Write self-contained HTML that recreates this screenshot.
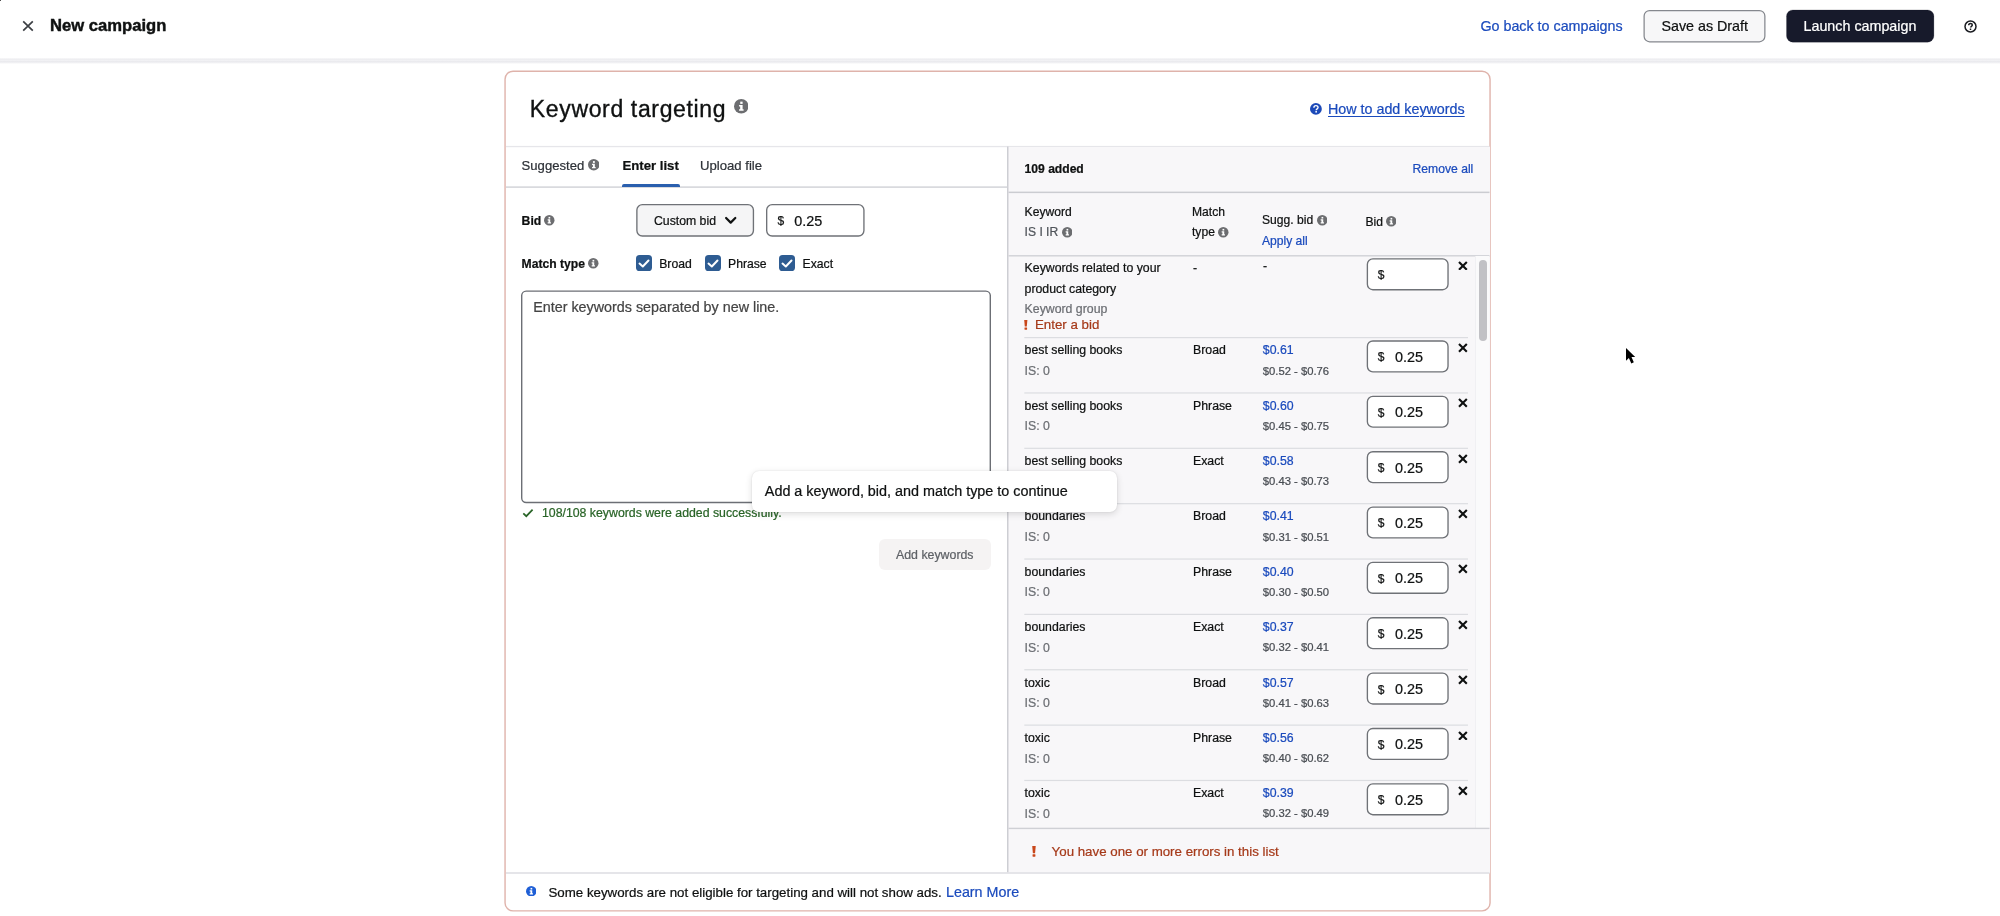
<!DOCTYPE html>
<html><head><meta charset="utf-8"><title>New campaign</title>
<style>
html,body{margin:0;padding:0;background:#fff;}
body{width:2000px;height:916px;position:relative;font-family:"Liberation Sans",sans-serif;}
.t{position:absolute;white-space:nowrap;line-height:1;-webkit-text-stroke:0.22px currentColor;}
.b{position:absolute;box-sizing:border-box;}
</style></head><body><div id="root" style="position:absolute;left:0;top:0;width:2000px;height:916px;overflow:hidden;will-change:transform;">
<svg class="b" style="left:21.6px;top:20.2px" width="12" height="12" viewBox="0 0 12 12"><path d="M1.2 1.4L10.8 10.6M10.8 1.4L1.2 10.6" stroke="#3c3f44" stroke-width="1.7" fill="none"/></svg>
<div class="t" style="top:17.30px;font-size:17.4px;color:#0f1111;left:50.2px;font-weight:bold;transform:scaleX(0.956);transform-origin:0 0;-webkit-text-stroke:0.45px #0f1111;">New campaign</div>
<div class="t" style="top:18.85px;font-size:14.3px;color:#1b4bbd;left:1480.4px;">Go back to campaigns</div>
<svg class="b" style="left:1642px;top:8px" width="125" height="36"><rect x="2.12" y="2.53" width="120.75" height="31.25" rx="5.5" fill="#f7f7f8" stroke="#85888e" stroke-width="1.25"/></svg>
<div class="t" style="top:18.85px;font-size:14.3px;color:#0f1111;left:1661.4px;">Save as Draft</div>
<svg class="b" style="left:1785px;top:8px" width="150" height="36"><rect x="1.50" y="1.90" width="147.40" height="32.30" rx="6.3" fill="#171a2b" stroke="#171a2b" stroke-width="0.2"/></svg>
<div class="t" style="top:18.85px;font-size:14.3px;color:#ffffff;left:1803.5px;">Launch campaign</div>
<svg class="b" style="left:1964.4px;top:19.6px" width="13" height="13" viewBox="0 0 13 13"><circle cx="6.5" cy="6.5" r="5.5" fill="none" stroke="#1b1d22" stroke-width="1.5"/><path d="M4.7 5.2c0-1.1.8-1.8 1.8-1.8s1.8.7 1.8 1.6c0 1.3-1.7 1.3-1.7 2.6" stroke="#1b1d22" stroke-width="1.5" fill="none"/><rect x="5.75" y="8.5" width="1.5" height="1.5" fill="#1b1d22"/></svg>
<div class="b" style="left:0px;top:58px;width:2000px;height:6px;background:linear-gradient(#fbfbfc 0%,#ededf0 18%,#f1f1f4 42%,#e9e9ed 62%,#f3f3f5 82%,#ffffff 100%);"></div>
<div class="b" style="left:0px;top:0px;width:1.3px;height:1.1px;background:#151515;border-radius:0 0 1px 0;"></div>
<svg class="b" style="left:503px;top:69px" width="989" height="844"><rect x="2.05" y="2.20" width="985.00" height="839.70" rx="8" fill="#fff" stroke="#dfb3ab" stroke-width="1.4"/></svg>
<div class="t" style="top:97.50px;font-size:23px;color:#0f1111;left:529.8px;letter-spacing:0.65px;-webkit-text-stroke:0.35px #0f1111;">Keyword targeting</div>
<svg class="b" style="left:733.75px;top:99.35px" width="14.5" height="14.5" viewBox="0 0 16 16"><circle cx="8" cy="8" r="8" fill="#6c6d70"/><rect x="6.9" y="2.9" width="2.6" height="2.5" fill="#fff"/><path d="M5.6 6.6h3.9v4.6h1.1v1.7H5.6v-1.7h1.2V8.3H5.6z" fill="#fff"/></svg>
<svg class="b" style="left:1310.4px;top:102.8px" width="11.8" height="11.8" viewBox="0 0 16 16"><circle cx="8" cy="8" r="8" fill="#1c49b8"/><path d="M5.3 6.3c0-1.7 1.2-2.8 2.8-2.8s2.8 1 2.8 2.5c0 2-2.5 1.9-2.5 3.7" stroke="#fff" stroke-width="1.9" fill="none"/><rect x="7.3" y="10.9" width="2.1" height="2.1" fill="#fff"/></svg>
<div class="t" style="top:101.85px;font-size:14.3px;color:#1b4bbd;left:1328px;text-decoration:underline;text-underline-offset:1.5px;text-decoration-thickness:1px;">How to add keywords</div>
<svg class="b" style="left:506px;top:145px" width="984" height="3"><rect x="0.00" y="0.90" width="983.50" height="1.30" fill="#e6e6ea"/></svg>
<div class="b" style="left:1008px;top:147px;width:481.5px;height:726px;background:#f8f7f9;"></div>
<svg class="b" style="left:1007px;top:146px" width="2" height="727"><rect x="0.00" y="0.50" width="1.50" height="726.50" fill="#cdced3"/></svg>
<div class="t" style="top:158.95px;font-size:13.1px;color:#2e3238;left:521.6px;">Suggested</div>
<svg class="b" style="left:587.65px;top:159.15px" width="11.5" height="11.5" viewBox="0 0 16 16"><circle cx="8" cy="8" r="8" fill="#6c6d70"/><rect x="6.9" y="2.9" width="2.6" height="2.5" fill="#fff"/><path d="M5.6 6.6h3.9v4.6h1.1v1.7H5.6v-1.7h1.2V8.3H5.6z" fill="#fff"/></svg>
<div class="t" style="top:158.90px;font-size:13.2px;color:#0f1111;left:622.4px;font-weight:bold;">Enter list</div>
<div class="t" style="top:158.93px;font-size:13.15px;color:#2e3238;left:700px;">Upload file</div>
<svg class="b" style="left:506px;top:186px" width="502" height="2"><rect x="0.00" y="0.40" width="501.50" height="1.40" fill="#d0d1d6"/></svg>
<div class="b" style="left:622px;top:183.5px;width:57.5px;height:3.6px;background:#2a5fae;border-radius:2px 2px 0 0;"></div>
<div class="t" style="top:214.90px;font-size:12.2px;color:#0f1111;left:521.6px;font-weight:bold;">Bid</div>
<svg class="b" style="left:544.35px;top:215.15px" width="10.5" height="10.5" viewBox="0 0 16 16"><circle cx="8" cy="8" r="8" fill="#6c6d70"/><rect x="6.9" y="2.9" width="2.6" height="2.5" fill="#fff"/><path d="M5.6 6.6h3.9v4.6h1.1v1.7H5.6v-1.7h1.2V8.3H5.6z" fill="#fff"/></svg>
<svg class="b" style="left:635px;top:202px" width="121" height="36"><rect x="1.88" y="2.58" width="116.55" height="31.45" rx="5.5" fill="#f5f5f6" stroke="#6f7277" stroke-width="1.35"/></svg>
<div class="t" style="top:214.88px;font-size:12.25px;color:#0f1111;left:654px;">Custom bid</div>
<svg class="b" style="left:723.5px;top:215.5px" width="14" height="10" viewBox="0 0 14 10"><path d="M2.1 2L6.7 6.6L11.3 2" stroke="#0f1111" stroke-width="2.2" fill="none" stroke-linecap="round" stroke-linejoin="round"/></svg>
<svg class="b" style="left:765px;top:202px" width="101" height="36"><rect x="1.68" y="2.58" width="97.25" height="31.45" rx="5.5" fill="#fff" stroke="#6f7277" stroke-width="1.35"/></svg>
<div class="t" style="top:215.00px;font-size:12px;color:#0f1111;left:777.6px;">$</div>
<div class="t" style="top:213.80px;font-size:14.4px;color:#0f1111;left:794.2px;">0.25</div>
<div class="t" style="top:257.93px;font-size:12.15px;color:#0f1111;left:521.6px;font-weight:bold;">Match type</div>
<svg class="b" style="left:588.45px;top:258.25px" width="10.5" height="10.5" viewBox="0 0 16 16"><circle cx="8" cy="8" r="8" fill="#6c6d70"/><rect x="6.9" y="2.9" width="2.6" height="2.5" fill="#fff"/><path d="M5.6 6.6h3.9v4.6h1.1v1.7H5.6v-1.7h1.2V8.3H5.6z" fill="#fff"/></svg>
<svg class="b" style="left:636.1px;top:254.9px" width="16" height="16" viewBox="0 0 16 16"><rect x="0" y="0" width="16" height="16" rx="3.6" fill="#2e5c92"/><path d="M3.5 8.6L6.8 11.5L12.5 5.5" stroke="#fff" stroke-width="2" fill="none" stroke-linecap="round" stroke-linejoin="round"/></svg>
<div class="t" style="top:257.90px;font-size:12.2px;color:#0f1111;left:659.2px;">Broad</div>
<svg class="b" style="left:704.9px;top:254.9px" width="16" height="16" viewBox="0 0 16 16"><rect x="0" y="0" width="16" height="16" rx="3.6" fill="#2e5c92"/><path d="M3.5 8.6L6.8 11.5L12.5 5.5" stroke="#fff" stroke-width="2" fill="none" stroke-linecap="round" stroke-linejoin="round"/></svg>
<div class="t" style="top:257.90px;font-size:12.2px;color:#0f1111;left:728px;">Phrase</div>
<svg class="b" style="left:779.4px;top:254.9px" width="16" height="16" viewBox="0 0 16 16"><rect x="0" y="0" width="16" height="16" rx="3.6" fill="#2e5c92"/><path d="M3.5 8.6L6.8 11.5L12.5 5.5" stroke="#fff" stroke-width="2" fill="none" stroke-linecap="round" stroke-linejoin="round"/></svg>
<div class="t" style="top:257.90px;font-size:12.2px;color:#0f1111;left:802.6px;">Exact</div>
<svg class="b" style="left:520px;top:289px" width="472" height="216"><rect x="1.70" y="2.10" width="468.60" height="211.40" rx="4.5" fill="#fff" stroke="#6c6f75" stroke-width="1.4"/></svg>
<div class="t" style="top:299.83px;font-size:14.33px;color:#444;left:533.2px;">Enter keywords separated by new line.</div>
<svg class="b" style="left:521.5px;top:507.5px" width="12" height="10" viewBox="0 0 12 10"><path d="M1.3 5.3L4.3 8.2L10.6 1.6" stroke="#296427" stroke-width="1.7" fill="none"/></svg>
<div class="t" style="top:506.85px;font-size:12.3px;color:#296427;left:542px;">108/108 keywords were added successfully.</div>
<div class="b" style="left:878.5px;top:538.8px;width:112px;height:31.7px;border-radius:6px;background:#f5f3f3;"></div>
<div class="t" style="top:548.83px;font-size:12.35px;color:#5e6166;left:896px;">Add keywords</div>
<div class="t" style="top:162.95px;font-size:12.1px;color:#0f1111;left:1024.6px;font-weight:bold;">109 added</div>
<div class="t" style="top:162.93px;font-size:12.15px;color:#1b4bbd;right:526.7px;">Remove all</div>
<svg class="b" style="left:1008px;top:191px" width="482" height="3"><rect x="0.50" y="0.60" width="481.00" height="1.50" fill="#cbccd1"/></svg>
<div class="t" style="top:205.95px;font-size:12.1px;color:#0f1111;left:1024.6px;">Keyword</div>
<div class="t" style="top:225.95px;font-size:12.1px;color:#50555b;left:1024.6px;">IS I IR</div>
<svg class="b" style="left:1061.55px;top:227.05px" width="10.5" height="10.5" viewBox="0 0 16 16"><circle cx="8" cy="8" r="8" fill="#6c6d70"/><rect x="6.9" y="2.9" width="2.6" height="2.5" fill="#fff"/><path d="M5.6 6.6h3.9v4.6h1.1v1.7H5.6v-1.7h1.2V8.3H5.6z" fill="#fff"/></svg>
<div class="t" style="top:205.95px;font-size:12.1px;color:#0f1111;left:1192px;">Match</div>
<div class="t" style="top:225.95px;font-size:12.1px;color:#0f1111;left:1192px;">type</div>
<svg class="b" style="left:1218.15px;top:227.05px" width="10.5" height="10.5" viewBox="0 0 16 16"><circle cx="8" cy="8" r="8" fill="#6c6d70"/><rect x="6.9" y="2.9" width="2.6" height="2.5" fill="#fff"/><path d="M5.6 6.6h3.9v4.6h1.1v1.7H5.6v-1.7h1.2V8.3H5.6z" fill="#fff"/></svg>
<div class="t" style="top:213.95px;font-size:12.1px;color:#0f1111;left:1262px;">Sugg. bid</div>
<svg class="b" style="left:1316.75px;top:215.25px" width="10.5" height="10.5" viewBox="0 0 16 16"><circle cx="8" cy="8" r="8" fill="#6c6d70"/><rect x="6.9" y="2.9" width="2.6" height="2.5" fill="#fff"/><path d="M5.6 6.6h3.9v4.6h1.1v1.7H5.6v-1.7h1.2V8.3H5.6z" fill="#fff"/></svg>
<div class="t" style="top:234.95px;font-size:12.1px;color:#1b4bbd;left:1262px;">Apply all</div>
<div class="t" style="top:215.95px;font-size:12.1px;color:#0f1111;left:1365.4px;">Bid</div>
<svg class="b" style="left:1385.95px;top:216.45px" width="10.5" height="10.5" viewBox="0 0 16 16"><circle cx="8" cy="8" r="8" fill="#6c6d70"/><rect x="6.9" y="2.9" width="2.6" height="2.5" fill="#fff"/><path d="M5.6 6.6h3.9v4.6h1.1v1.7H5.6v-1.7h1.2V8.3H5.6z" fill="#fff"/></svg>
<svg class="b" style="left:1008px;top:255px" width="482" height="2"><rect x="0.50" y="0.10" width="481.00" height="1.40" fill="#d0d1d6"/></svg>
<div class="t" style="top:261.85px;font-size:12.3px;color:#0f1111;left:1024.6px;">Keywords related to your</div>
<div class="t" style="top:282.85px;font-size:12.3px;color:#0f1111;left:1024.6px;">product category</div>
<div class="t" style="top:302.85px;font-size:12.3px;color:#6b6e73;left:1024.6px;">Keyword group</div>
<svg class="b" style="left:1023.7px;top:320px" width="4" height="10" viewBox="0 0 4 10"><path d="M0.2 0H3.4L2.8 6.5H0.8Z" fill="#c9471b"/><rect x="0.5" y="7.4" width="2.6" height="2.3" rx="0.4" fill="#c9471b"/></svg>
<div class="t" style="top:317.85px;font-size:13.3px;color:#a63a1a;left:1035px;">Enter a bid</div>
<div class="t" style="top:261.85px;font-size:12.3px;color:#0f1111;left:1193px;">-</div>
<div class="t" style="top:259.85px;font-size:12.3px;color:#0f1111;left:1263px;">-</div>
<svg class="b" style="left:1365px;top:257px" width="85" height="35"><rect x="2.38" y="1.87" width="80.65" height="30.85" rx="5.5" fill="#fff" stroke="#6f7277" stroke-width="1.35"/></svg>
<div class="t" style="top:269.00px;font-size:12px;color:#0f1111;left:1377.8px;">$</div>
<svg class="b" style="left:1458.1px;top:260.7px" width="9.8" height="9.8" viewBox="0 0 10 10"><path d="M1 1L9 9M9 1L1 9" stroke="#0f1111" stroke-width="2.15" stroke-linecap="butt" fill="none"/></svg>
<svg class="b" style="left:1024px;top:337px" width="444" height="2"><rect x="0.30" y="0.00" width="443.70" height="1.20" fill="#dcdde1"/></svg>
<div class="t" style="top:343.85px;font-size:12.3px;color:#0f1111;left:1024.6px;">best selling books</div>
<div class="t" style="top:364.85px;font-size:12.3px;color:#6b6e73;left:1024.6px;">IS: 0</div>
<div class="t" style="top:343.85px;font-size:12.3px;color:#0f1111;left:1193px;">Broad</div>
<div class="t" style="top:343.85px;font-size:12.3px;color:#1b4bbd;left:1262.8px;">$0.61</div>
<div class="t" style="top:366.38px;font-size:11.25px;color:#484c52;left:1262.8px;">$0.52 - $0.76</div>
<svg class="b" style="left:1365px;top:339px" width="85" height="35"><rect x="2.38" y="1.98" width="80.65" height="30.85" rx="5.5" fill="#fff" stroke="#6f7277" stroke-width="1.35"/></svg>
<div class="t" style="top:351.00px;font-size:12px;color:#0f1111;left:1377.8px;">$</div>
<div class="t" style="top:349.80px;font-size:14.4px;color:#0f1111;left:1395px;">0.25</div>
<svg class="b" style="left:1458.1px;top:343.0px" width="9.8" height="9.8" viewBox="0 0 10 10"><path d="M1 1L9 9M9 1L1 9" stroke="#0f1111" stroke-width="2.15" stroke-linecap="butt" fill="none"/></svg>
<svg class="b" style="left:1024px;top:392px" width="444" height="2"><rect x="0.30" y="0.36" width="443.70" height="1.20" fill="#dcdde1"/></svg>
<div class="t" style="top:399.85px;font-size:12.3px;color:#0f1111;left:1024.6px;">best selling books</div>
<div class="t" style="top:419.85px;font-size:12.3px;color:#6b6e73;left:1024.6px;">IS: 0</div>
<div class="t" style="top:399.85px;font-size:12.3px;color:#0f1111;left:1193px;">Phrase</div>
<div class="t" style="top:399.85px;font-size:12.3px;color:#1b4bbd;left:1262.8px;">$0.60</div>
<div class="t" style="top:421.38px;font-size:11.25px;color:#484c52;left:1262.8px;">$0.45 - $0.75</div>
<svg class="b" style="left:1365px;top:394px" width="85" height="35"><rect x="2.38" y="2.34" width="80.65" height="30.85" rx="5.5" fill="#fff" stroke="#6f7277" stroke-width="1.35"/></svg>
<div class="t" style="top:407.00px;font-size:12px;color:#0f1111;left:1377.8px;">$</div>
<div class="t" style="top:404.80px;font-size:14.4px;color:#0f1111;left:1395px;">0.25</div>
<svg class="b" style="left:1458.1px;top:398.36px" width="9.8" height="9.8" viewBox="0 0 10 10"><path d="M1 1L9 9M9 1L1 9" stroke="#0f1111" stroke-width="2.15" stroke-linecap="butt" fill="none"/></svg>
<svg class="b" style="left:1024px;top:447px" width="444" height="2"><rect x="0.30" y="0.72" width="443.70" height="1.20" fill="#dcdde1"/></svg>
<div class="t" style="top:454.85px;font-size:12.3px;color:#0f1111;left:1024.6px;">best selling books</div>
<div class="t" style="top:475.85px;font-size:12.3px;color:#6b6e73;left:1024.6px;">IS: 0</div>
<div class="t" style="top:454.85px;font-size:12.3px;color:#0f1111;left:1193px;">Exact</div>
<div class="t" style="top:454.85px;font-size:12.3px;color:#1b4bbd;left:1262.8px;">$0.58</div>
<div class="t" style="top:476.38px;font-size:11.25px;color:#484c52;left:1262.8px;">$0.43 - $0.73</div>
<svg class="b" style="left:1365px;top:450px" width="85" height="35"><rect x="2.38" y="1.70" width="80.65" height="30.85" rx="5.5" fill="#fff" stroke="#6f7277" stroke-width="1.35"/></svg>
<div class="t" style="top:462.00px;font-size:12px;color:#0f1111;left:1377.8px;">$</div>
<div class="t" style="top:460.80px;font-size:14.4px;color:#0f1111;left:1395px;">0.25</div>
<svg class="b" style="left:1458.1px;top:453.72px" width="9.8" height="9.8" viewBox="0 0 10 10"><path d="M1 1L9 9M9 1L1 9" stroke="#0f1111" stroke-width="2.15" stroke-linecap="butt" fill="none"/></svg>
<svg class="b" style="left:1024px;top:503px" width="444" height="2"><rect x="0.30" y="0.08" width="443.70" height="1.20" fill="#dcdde1"/></svg>
<div class="t" style="top:509.85px;font-size:12.3px;color:#0f1111;left:1024.6px;">boundaries</div>
<div class="t" style="top:530.85px;font-size:12.3px;color:#6b6e73;left:1024.6px;">IS: 0</div>
<div class="t" style="top:509.85px;font-size:12.3px;color:#0f1111;left:1193px;">Broad</div>
<div class="t" style="top:509.85px;font-size:12.3px;color:#1b4bbd;left:1262.8px;">$0.41</div>
<div class="t" style="top:532.38px;font-size:11.25px;color:#484c52;left:1262.8px;">$0.31 - $0.51</div>
<svg class="b" style="left:1365px;top:505px" width="85" height="35"><rect x="2.38" y="2.05" width="80.65" height="30.85" rx="5.5" fill="#fff" stroke="#6f7277" stroke-width="1.35"/></svg>
<div class="t" style="top:517.00px;font-size:12px;color:#0f1111;left:1377.8px;">$</div>
<div class="t" style="top:515.80px;font-size:14.4px;color:#0f1111;left:1395px;">0.25</div>
<svg class="b" style="left:1458.1px;top:509.08px" width="9.8" height="9.8" viewBox="0 0 10 10"><path d="M1 1L9 9M9 1L1 9" stroke="#0f1111" stroke-width="2.15" stroke-linecap="butt" fill="none"/></svg>
<svg class="b" style="left:1024px;top:558px" width="444" height="2"><rect x="0.30" y="0.44" width="443.70" height="1.20" fill="#dcdde1"/></svg>
<div class="t" style="top:565.85px;font-size:12.3px;color:#0f1111;left:1024.6px;">boundaries</div>
<div class="t" style="top:585.85px;font-size:12.3px;color:#6b6e73;left:1024.6px;">IS: 0</div>
<div class="t" style="top:565.85px;font-size:12.3px;color:#0f1111;left:1193px;">Phrase</div>
<div class="t" style="top:565.85px;font-size:12.3px;color:#1b4bbd;left:1262.8px;">$0.40</div>
<div class="t" style="top:587.38px;font-size:11.25px;color:#484c52;left:1262.8px;">$0.30 - $0.50</div>
<svg class="b" style="left:1365px;top:560px" width="85" height="35"><rect x="2.38" y="2.42" width="80.65" height="30.85" rx="5.5" fill="#fff" stroke="#6f7277" stroke-width="1.35"/></svg>
<div class="t" style="top:573.00px;font-size:12px;color:#0f1111;left:1377.8px;">$</div>
<div class="t" style="top:570.80px;font-size:14.4px;color:#0f1111;left:1395px;">0.25</div>
<svg class="b" style="left:1458.1px;top:564.4399999999999px" width="9.8" height="9.8" viewBox="0 0 10 10"><path d="M1 1L9 9M9 1L1 9" stroke="#0f1111" stroke-width="2.15" stroke-linecap="butt" fill="none"/></svg>
<svg class="b" style="left:1024px;top:613px" width="444" height="3"><rect x="0.30" y="0.80" width="443.70" height="1.20" fill="#dcdde1"/></svg>
<div class="t" style="top:620.85px;font-size:12.3px;color:#0f1111;left:1024.6px;">boundaries</div>
<div class="t" style="top:641.85px;font-size:12.3px;color:#6b6e73;left:1024.6px;">IS: 0</div>
<div class="t" style="top:620.85px;font-size:12.3px;color:#0f1111;left:1193px;">Exact</div>
<div class="t" style="top:620.85px;font-size:12.3px;color:#1b4bbd;left:1262.8px;">$0.37</div>
<div class="t" style="top:642.38px;font-size:11.25px;color:#484c52;left:1262.8px;">$0.32 - $0.41</div>
<svg class="b" style="left:1365px;top:616px" width="85" height="35"><rect x="2.38" y="1.78" width="80.65" height="30.85" rx="5.5" fill="#fff" stroke="#6f7277" stroke-width="1.35"/></svg>
<div class="t" style="top:628.00px;font-size:12px;color:#0f1111;left:1377.8px;">$</div>
<div class="t" style="top:626.80px;font-size:14.4px;color:#0f1111;left:1395px;">0.25</div>
<svg class="b" style="left:1458.1px;top:619.8000000000001px" width="9.8" height="9.8" viewBox="0 0 10 10"><path d="M1 1L9 9M9 1L1 9" stroke="#0f1111" stroke-width="2.15" stroke-linecap="butt" fill="none"/></svg>
<svg class="b" style="left:1024px;top:669px" width="444" height="2"><rect x="0.30" y="0.16" width="443.70" height="1.20" fill="#dcdde1"/></svg>
<div class="t" style="top:676.85px;font-size:12.3px;color:#0f1111;left:1024.6px;">toxic</div>
<div class="t" style="top:696.85px;font-size:12.3px;color:#6b6e73;left:1024.6px;">IS: 0</div>
<div class="t" style="top:676.85px;font-size:12.3px;color:#0f1111;left:1193px;">Broad</div>
<div class="t" style="top:676.85px;font-size:12.3px;color:#1b4bbd;left:1262.8px;">$0.57</div>
<div class="t" style="top:698.38px;font-size:11.25px;color:#484c52;left:1262.8px;">$0.41 - $0.63</div>
<svg class="b" style="left:1365px;top:671px" width="85" height="35"><rect x="2.38" y="2.14" width="80.65" height="30.85" rx="5.5" fill="#fff" stroke="#6f7277" stroke-width="1.35"/></svg>
<div class="t" style="top:684.00px;font-size:12px;color:#0f1111;left:1377.8px;">$</div>
<div class="t" style="top:681.80px;font-size:14.4px;color:#0f1111;left:1395px;">0.25</div>
<svg class="b" style="left:1458.1px;top:675.16px" width="9.8" height="9.8" viewBox="0 0 10 10"><path d="M1 1L9 9M9 1L1 9" stroke="#0f1111" stroke-width="2.15" stroke-linecap="butt" fill="none"/></svg>
<svg class="b" style="left:1024px;top:724px" width="444" height="2"><rect x="0.30" y="0.52" width="443.70" height="1.20" fill="#dcdde1"/></svg>
<div class="t" style="top:731.85px;font-size:12.3px;color:#0f1111;left:1024.6px;">toxic</div>
<div class="t" style="top:752.85px;font-size:12.3px;color:#6b6e73;left:1024.6px;">IS: 0</div>
<div class="t" style="top:731.85px;font-size:12.3px;color:#0f1111;left:1193px;">Phrase</div>
<div class="t" style="top:731.85px;font-size:12.3px;color:#1b4bbd;left:1262.8px;">$0.56</div>
<div class="t" style="top:753.38px;font-size:11.25px;color:#484c52;left:1262.8px;">$0.40 - $0.62</div>
<svg class="b" style="left:1365px;top:726px" width="85" height="36"><rect x="2.38" y="2.50" width="80.65" height="30.85" rx="5.5" fill="#fff" stroke="#6f7277" stroke-width="1.35"/></svg>
<div class="t" style="top:739.00px;font-size:12px;color:#0f1111;left:1377.8px;">$</div>
<div class="t" style="top:736.80px;font-size:14.4px;color:#0f1111;left:1395px;">0.25</div>
<svg class="b" style="left:1458.1px;top:730.52px" width="9.8" height="9.8" viewBox="0 0 10 10"><path d="M1 1L9 9M9 1L1 9" stroke="#0f1111" stroke-width="2.15" stroke-linecap="butt" fill="none"/></svg>
<svg class="b" style="left:1024px;top:779px" width="444" height="3"><rect x="0.30" y="0.88" width="443.70" height="1.20" fill="#dcdde1"/></svg>
<div class="t" style="top:786.85px;font-size:12.3px;color:#0f1111;left:1024.6px;">toxic</div>
<div class="t" style="top:807.85px;font-size:12.3px;color:#6b6e73;left:1024.6px;">IS: 0</div>
<div class="t" style="top:786.85px;font-size:12.3px;color:#0f1111;left:1193px;">Exact</div>
<div class="t" style="top:786.85px;font-size:12.3px;color:#1b4bbd;left:1262.8px;">$0.39</div>
<div class="t" style="top:808.38px;font-size:11.25px;color:#484c52;left:1262.8px;">$0.32 - $0.49</div>
<svg class="b" style="left:1365px;top:782px" width="85" height="35"><rect x="2.38" y="1.86" width="80.65" height="30.85" rx="5.5" fill="#fff" stroke="#6f7277" stroke-width="1.35"/></svg>
<div class="t" style="top:794.00px;font-size:12px;color:#0f1111;left:1377.8px;">$</div>
<div class="t" style="top:792.80px;font-size:14.4px;color:#0f1111;left:1395px;">0.25</div>
<svg class="b" style="left:1458.1px;top:785.88px" width="9.8" height="9.8" viewBox="0 0 10 10"><path d="M1 1L9 9M9 1L1 9" stroke="#0f1111" stroke-width="2.15" stroke-linecap="butt" fill="none"/></svg>
<div class="b" style="left:1475px;top:256.3px;width:14px;height:571.7px;background:#fafafb;border-left:1px solid #f0f0f3;"></div>
<div class="b" style="left:1479px;top:259.5px;width:8px;height:81px;background:#c1c1c5;border-radius:4px;"></div>
<div class="b" style="left:1008.5px;top:828px;width:481px;height:45px;background:#f8f7f9;"></div>
<svg class="b" style="left:1008px;top:827px" width="482" height="3"><rect x="0.50" y="0.70" width="481.00" height="1.40" fill="#cfd0d5"/></svg>
<svg class="b" style="left:1031.9px;top:845.6px" width="4.4" height="11" viewBox="0 0 4 10"><path d="M0.2 0H3.4L2.8 6.5H0.8Z" fill="#c9471b"/><rect x="0.5" y="7.4" width="2.6" height="2.3" rx="0.4" fill="#c9471b"/></svg>
<div class="t" style="top:844.85px;font-size:13.3px;color:#a63a1a;left:1051.6px;">You have one or more errors in this list</div>
<svg class="b" style="left:506px;top:872px" width="984" height="2"><rect x="0.00" y="0.10" width="983.50" height="1.80" fill="#e3e3e7"/></svg>
<svg class="b" style="left:525.65px;top:885.55px" width="10.5" height="10.5" viewBox="0 0 16 16"><circle cx="8" cy="8" r="8" fill="#1f5fd6"/><rect x="6.9" y="2.9" width="2.6" height="2.5" fill="#fff"/><path d="M5.6 6.6h3.9v4.6h1.1v1.7H5.6v-1.7h1.2V8.3H5.6z" fill="#fff"/></svg>
<div class="t" style="top:885.85px;font-size:13.3px;color:#0f1111;left:548.5px;">Some keywords are not eligible for targeting and will not show ads.</div>
<div class="t" style="top:884.85px;font-size:14.3px;color:#1b4bbd;left:946px;">Learn More</div>
<div class="b" style="left:752px;top:471px;width:365px;height:41px;background:#fff;border-radius:7px;box-shadow:0 2px 7px rgba(0,0,0,0.14),0 0 1.5px rgba(0,0,0,0.12);"></div>
<div class="t" style="top:483.81px;font-size:14.38px;color:#0f1111;left:764.8px;">Add a keyword, bid, and match type to continue</div>
<svg class="b" style="left:1624.4px;top:345.5px" width="15" height="21" viewBox="-2 -2 15 21"><path d="M0 0L0 12.7L2.9 10L5.3 15.4L7.8 14.3L5.5 9.1L9.2 9.1Z" fill="#000" stroke="#fff" stroke-width="1.2" paint-order="stroke" stroke-linejoin="round"/></svg>
</div></body></html>
